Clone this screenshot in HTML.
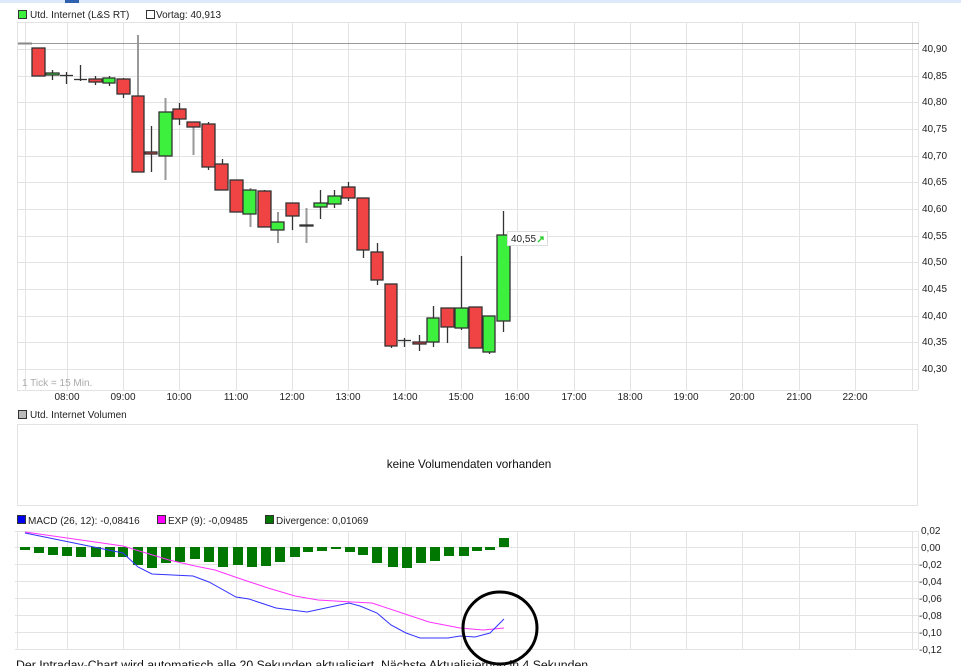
<!DOCTYPE html>
<html><head><meta charset="utf-8"><style>
html,body{margin:0;padding:0;background:#fff;width:961px;height:666px;overflow:hidden}
svg{display:block;font-family:"Liberation Sans",sans-serif}
</style></head><body>
<svg width="961" height="666" viewBox="0 0 961 666" xmlns="http://www.w3.org/2000/svg">
<rect x="0" y="0" width="961" height="3" fill="#dde8f8"/>
<rect x="65" y="0" width="14" height="3" fill="#3060b0"/>
<!-- legend top -->
<rect x="18.5" y="10.5" width="8" height="8" fill="#3ef03e" stroke="#333"/>
<text x="30" y="18" font-size="10" fill="#222">Utd. Internet (L&amp;S RT)</text>
<rect x="146.5" y="10.5" width="8" height="8" fill="#fff" stroke="#333"/>
<text x="156" y="18" font-size="10" fill="#222">Vortag: 40,913</text>
<!-- price grid -->
<g stroke="#e3e3e3" stroke-width="1">
<line x1="17" y1="22.5" x2="918" y2="22.5"/>
<line x1="17" y1="390.5" x2="918" y2="390.5"/>
<line x1="17.5" y1="22" x2="17.5" y2="390"/>
<line x1="918.5" y1="22" x2="918.5" y2="390"/>
<line x1="25.5" y1="22" x2="25.5" y2="390"/>
<line x1="67.5" y1="22" x2="67.5" y2="390"/><line x1="123.5" y1="22" x2="123.5" y2="390"/><line x1="179.5" y1="22" x2="179.5" y2="390"/><line x1="236.5" y1="22" x2="236.5" y2="390"/><line x1="292.5" y1="22" x2="292.5" y2="390"/><line x1="348.5" y1="22" x2="348.5" y2="390"/><line x1="405.5" y1="22" x2="405.5" y2="390"/><line x1="461.5" y1="22" x2="461.5" y2="390"/><line x1="517.5" y1="22" x2="517.5" y2="390"/><line x1="574.5" y1="22" x2="574.5" y2="390"/><line x1="630.5" y1="22" x2="630.5" y2="390"/><line x1="686.5" y1="22" x2="686.5" y2="390"/><line x1="742.5" y1="22" x2="742.5" y2="390"/><line x1="799.5" y1="22" x2="799.5" y2="390"/><line x1="855.5" y1="22" x2="855.5" y2="390"/><line x1="912.5" y1="22" x2="912.5" y2="390"/>
<line x1="17" y1="49.5" x2="918" y2="49.5"/><line x1="17" y1="76.5" x2="918" y2="76.5"/><line x1="17" y1="102.5" x2="918" y2="102.5"/><line x1="17" y1="129.5" x2="918" y2="129.5"/><line x1="17" y1="156.5" x2="918" y2="156.5"/><line x1="17" y1="182.5" x2="918" y2="182.5"/><line x1="17" y1="209.5" x2="918" y2="209.5"/><line x1="17" y1="236.5" x2="918" y2="236.5"/><line x1="17" y1="262.5" x2="918" y2="262.5"/><line x1="17" y1="289.5" x2="918" y2="289.5"/><line x1="17" y1="316.5" x2="918" y2="316.5"/><line x1="17" y1="342.5" x2="918" y2="342.5"/><line x1="17" y1="369.5" x2="918" y2="369.5"/>
</g>
<line x1="18" y1="43.5" x2="919" y2="43.5" stroke="#999" stroke-width="1"/>
<line x1="18" y1="43.5" x2="32" y2="43.5" stroke="#888" stroke-width="2"/>
<!-- price axis -->
<g font-size="10" fill="#222">
<text x="922" y="52">40,90</text><text x="922" y="79">40,85</text><text x="922" y="105">40,80</text><text x="922" y="132">40,75</text><text x="922" y="159">40,70</text><text x="922" y="185">40,65</text><text x="922" y="212">40,60</text><text x="922" y="239">40,55</text><text x="922" y="265">40,50</text><text x="922" y="292">40,45</text><text x="922" y="319">40,40</text><text x="922" y="345">40,35</text><text x="922" y="372">40,30</text>
</g>
<g font-size="10" fill="#222" text-anchor="middle">
<text x="67" y="400">08:00</text><text x="123" y="400">09:00</text><text x="179" y="400">10:00</text><text x="236" y="400">11:00</text><text x="292" y="400">12:00</text><text x="348" y="400">13:00</text><text x="405" y="400">14:00</text><text x="461" y="400">15:00</text><text x="517" y="400">16:00</text><text x="574" y="400">17:00</text><text x="630" y="400">18:00</text><text x="686" y="400">19:00</text><text x="742" y="400">20:00</text><text x="799" y="400">21:00</text><text x="855" y="400">22:00</text>
</g>
<text x="22" y="386" font-size="10" fill="#aaa">1 Tick = 15 Min.</text>
<!-- candles -->
<g stroke="#333" stroke-width="1.3">
<g fill="none">
<line x1="52.5" y1="70" x2="52.5" y2="80"/><line x1="66.5" y1="72" x2="66.5" y2="84"/><line x1="80.5" y1="65" x2="80.5" y2="81"/><line x1="95.5" y1="76" x2="95.5" y2="85"/><line x1="109.5" y1="76" x2="109.5" y2="86"/><line x1="123.5" y1="78" x2="123.5" y2="98"/>
<line x1="138" y1="35" x2="138" y2="172" stroke="#999" stroke-width="2"/>
<line x1="151.5" y1="126" x2="151.5" y2="172"/><line x1="165.5" y1="98" x2="165.5" y2="180" stroke="#999" stroke-width="2"/><line x1="179.5" y1="103" x2="179.5" y2="125"/><line x1="193.5" y1="122" x2="193.5" y2="155" stroke="#999" stroke-width="2"/><line x1="208.5" y1="122" x2="208.5" y2="170"/><line x1="222.5" y1="159" x2="222.5" y2="190"/><line x1="236.5" y1="180" x2="236.5" y2="212"/><line x1="250.5" y1="188" x2="250.5" y2="227" stroke="#999" stroke-width="2"/><line x1="264.5" y1="190" x2="264.5" y2="227"/><line x1="278" y1="212" x2="278" y2="243" stroke="#999" stroke-width="2"/><line x1="292.5" y1="203" x2="292.5" y2="230"/><line x1="306.5" y1="208" x2="306.5" y2="243" stroke="#999" stroke-width="2"/><line x1="320.5" y1="190" x2="320.5" y2="219"/><line x1="334.5" y1="190" x2="334.5" y2="208"/><line x1="348.5" y1="182" x2="348.5" y2="201"/><line x1="363.5" y1="198" x2="363.5" y2="258"/><line x1="377.5" y1="243" x2="377.5" y2="285"/><line x1="391.5" y1="284" x2="391.5" y2="348"/><line x1="404.5" y1="338" x2="404.5" y2="347"/><line x1="419.5" y1="335" x2="419.5" y2="351"/><line x1="433.5" y1="306" x2="433.5" y2="347"/><line x1="447.5" y1="308" x2="447.5" y2="343"/><line x1="461.5" y1="256" x2="461.5" y2="330"/><line x1="475.5" y1="307" x2="475.5" y2="348"/><line x1="489.5" y1="316" x2="489.5" y2="354"/><line x1="503.5" y1="211" x2="503.5" y2="332"/>
</g>
<g fill="#f04444">
<rect x="32" y="48" width="13" height="28"/><rect x="89" y="79" width="13" height="3"/><rect x="117" y="79" width="13" height="15"/><rect x="132" y="96" width="12" height="76"/><rect x="145" y="152" width="12" height="2"/><rect x="173" y="109" width="13" height="10"/><rect x="187" y="122" width="13" height="5"/><rect x="202" y="124" width="13" height="43"/><rect x="215" y="164" width="13" height="26"/><rect x="230" y="180" width="13" height="32"/><rect x="258" y="191" width="13" height="36"/><rect x="286" y="203" width="13" height="13"/><rect x="342" y="187" width="13" height="11"/><rect x="357" y="198" width="12" height="52"/><rect x="371" y="252" width="12" height="28"/><rect x="385" y="284" width="12" height="62"/><rect x="413" y="342" width="13" height="2"/><rect x="441" y="308" width="13" height="19"/><rect x="469" y="307" width="13" height="41"/>
</g>
<g fill="#3ef03e">
<rect x="46" y="73" width="13" height="2"/><rect x="103" y="78" width="12" height="5"/><rect x="159" y="112" width="13" height="44"/><rect x="243" y="190" width="13" height="24"/><rect x="271" y="222" width="13" height="8"/><rect x="300" y="225" width="13" height="1"/><rect x="314" y="203" width="13" height="4"/><rect x="328" y="196" width="13" height="8"/><rect x="427" y="318" width="12" height="24"/><rect x="455" y="308" width="13" height="20"/><rect x="483" y="316" width="12" height="36"/><rect x="497" y="235" width="13" height="86"/>
</g>
<g fill="none"><line x1="60" y1="75.5" x2="73" y2="75.5"/><line x1="74" y1="79.5" x2="87" y2="79.5"/><line x1="398" y1="340.5" x2="411" y2="340.5"/></g>
</g>
<rect x="507.5" y="231.5" width="40" height="14" fill="#fff" stroke="#ddd"/>
<text x="511" y="242" font-size="10" fill="#222">40,55</text>
<path d="M538 242 L543 237 M540 237 L543 237 L543 240" stroke="#2c2" stroke-width="1.3" fill="none"/>
<!-- volume -->
<rect x="18.5" y="410.5" width="8" height="8" fill="#bbb" stroke="#333"/>
<text x="30" y="418" font-size="10" fill="#222">Utd. Internet Volumen</text>
<rect x="17.5" y="424.5" width="900" height="81" fill="#fff" stroke="#e3e3e3"/>
<text x="469" y="468" font-size="11.7" fill="#111" text-anchor="middle">keine Volumendaten vorhanden</text>
<!-- MACD legend -->
<rect x="17.5" y="515.5" width="8" height="8" fill="#0000ee" stroke="#333"/>
<text x="28" y="524" font-size="10" fill="#222">MACD (26, 12): -0,08416</text>
<rect x="157.5" y="515.5" width="8" height="8" fill="#ff00ff" stroke="#333"/>
<text x="168" y="524" font-size="10" fill="#222">EXP (9): -0,09485</text>
<rect x="265.5" y="515.5" width="8" height="8" fill="#007700" stroke="#333"/>
<text x="276" y="524" font-size="10" fill="#222">Divergence: 0,01069</text>
<!-- MACD grid -->
<g stroke="#e3e3e3">
<line x1="15" y1="531.5" x2="918" y2="531.5"/><line x1="15" y1="547.5" x2="918" y2="547.5"/><line x1="15" y1="564.5" x2="918" y2="564.5"/><line x1="15" y1="581.5" x2="918" y2="581.5"/><line x1="15" y1="598.5" x2="918" y2="598.5"/><line x1="15" y1="615.5" x2="918" y2="615.5"/><line x1="15" y1="632.5" x2="918" y2="632.5"/><line x1="15" y1="649.5" x2="918" y2="649.5"/>
<line x1="17.5" y1="531" x2="17.5" y2="649"/><line x1="918.5" y1="531" x2="918.5" y2="649"/>
<line x1="67.5" y1="531" x2="67.5" y2="649"/><line x1="123.5" y1="531" x2="123.5" y2="649"/><line x1="179.5" y1="531" x2="179.5" y2="649"/><line x1="236.5" y1="531" x2="236.5" y2="649"/><line x1="292.5" y1="531" x2="292.5" y2="649"/><line x1="348.5" y1="531" x2="348.5" y2="649"/><line x1="405.5" y1="531" x2="405.5" y2="649"/><line x1="461.5" y1="531" x2="461.5" y2="649"/><line x1="517.5" y1="531" x2="517.5" y2="649"/><line x1="574.5" y1="531" x2="574.5" y2="649"/><line x1="630.5" y1="531" x2="630.5" y2="649"/><line x1="686.5" y1="531" x2="686.5" y2="649"/><line x1="742.5" y1="531" x2="742.5" y2="649"/><line x1="799.5" y1="531" x2="799.5" y2="649"/><line x1="855.5" y1="531" x2="855.5" y2="649"/><line x1="912.5" y1="531" x2="912.5" y2="649"/>
</g>
<g font-size="10" fill="#222">
<text x="921" y="534">0,02</text><text x="921" y="551">0,00</text><text x="919" y="568">-0,02</text><text x="919" y="585">-0,04</text><text x="919" y="602">-0,06</text><text x="919" y="619">-0,08</text><text x="919" y="636">-0,10</text><text x="919" y="653">-0,12</text>
</g>
<g fill="#007700">
<rect x="20" y="547" width="10" height="3"/><rect x="34" y="547" width="10" height="6"/><rect x="48" y="547" width="10" height="8"/><rect x="62" y="547" width="10" height="9"/><rect x="76" y="547" width="10" height="10"/><rect x="91" y="547" width="10" height="10"/><rect x="105" y="547" width="10" height="10"/><rect x="118" y="547" width="10" height="10"/><rect x="133" y="547" width="10" height="18"/><rect x="147" y="547" width="10" height="21"/><rect x="161" y="547" width="10" height="16"/><rect x="175" y="547" width="10" height="15"/><rect x="190" y="547" width="10" height="12"/><rect x="204" y="547" width="10" height="15"/><rect x="218" y="547" width="10" height="20"/><rect x="233" y="547" width="10" height="18"/><rect x="247" y="547" width="10" height="20"/><rect x="261" y="547" width="10" height="19"/><rect x="275" y="547" width="10" height="15"/><rect x="290" y="547" width="10" height="10"/><rect x="303" y="547" width="10" height="5"/><rect x="317" y="547" width="10" height="4"/><rect x="331" y="547" width="10" height="2"/><rect x="345" y="547" width="10" height="5"/><rect x="358" y="547" width="10" height="8"/><rect x="372" y="547" width="10" height="16"/><rect x="388" y="547" width="10" height="20"/><rect x="402" y="547" width="10" height="21"/><rect x="416" y="547" width="10" height="16"/><rect x="430" y="547" width="10" height="14"/><rect x="444" y="547" width="10" height="9"/><rect x="459" y="547" width="10" height="9"/><rect x="472" y="547" width="10" height="4"/><rect x="485" y="547" width="10" height="3"/><rect x="499" y="538" width="10" height="9"/>
</g>
<polyline fill="none" stroke="#ff33ff" stroke-width="1" points="25,532 123,546 146,553 169,560 195,566 215,570 238,578 268,588 295,596 318,600 352,602 372,603 402,613 429,622 460,628 483,630 504,628"/>
<polyline fill="none" stroke="#3333ff" stroke-width="1" points="25,533 123,553 138,567 152,574 193,576 209,582 236,597 249,599 276,608 307,612 349,603 360,606 377,613 391,625 406,633 420,638 448,638 460,636 475,637 490,633 504,619"/>
<ellipse cx="500" cy="628" rx="37" ry="36" fill="none" stroke="#000" stroke-width="3"/>
<text x="16" y="669" font-size="12.3" fill="#111">Der Intraday-Chart wird automatisch alle 20 Sekunden aktualisiert. Nächste Aktualisierung in 4 Sekunden.</text>
</svg>
</body></html>
